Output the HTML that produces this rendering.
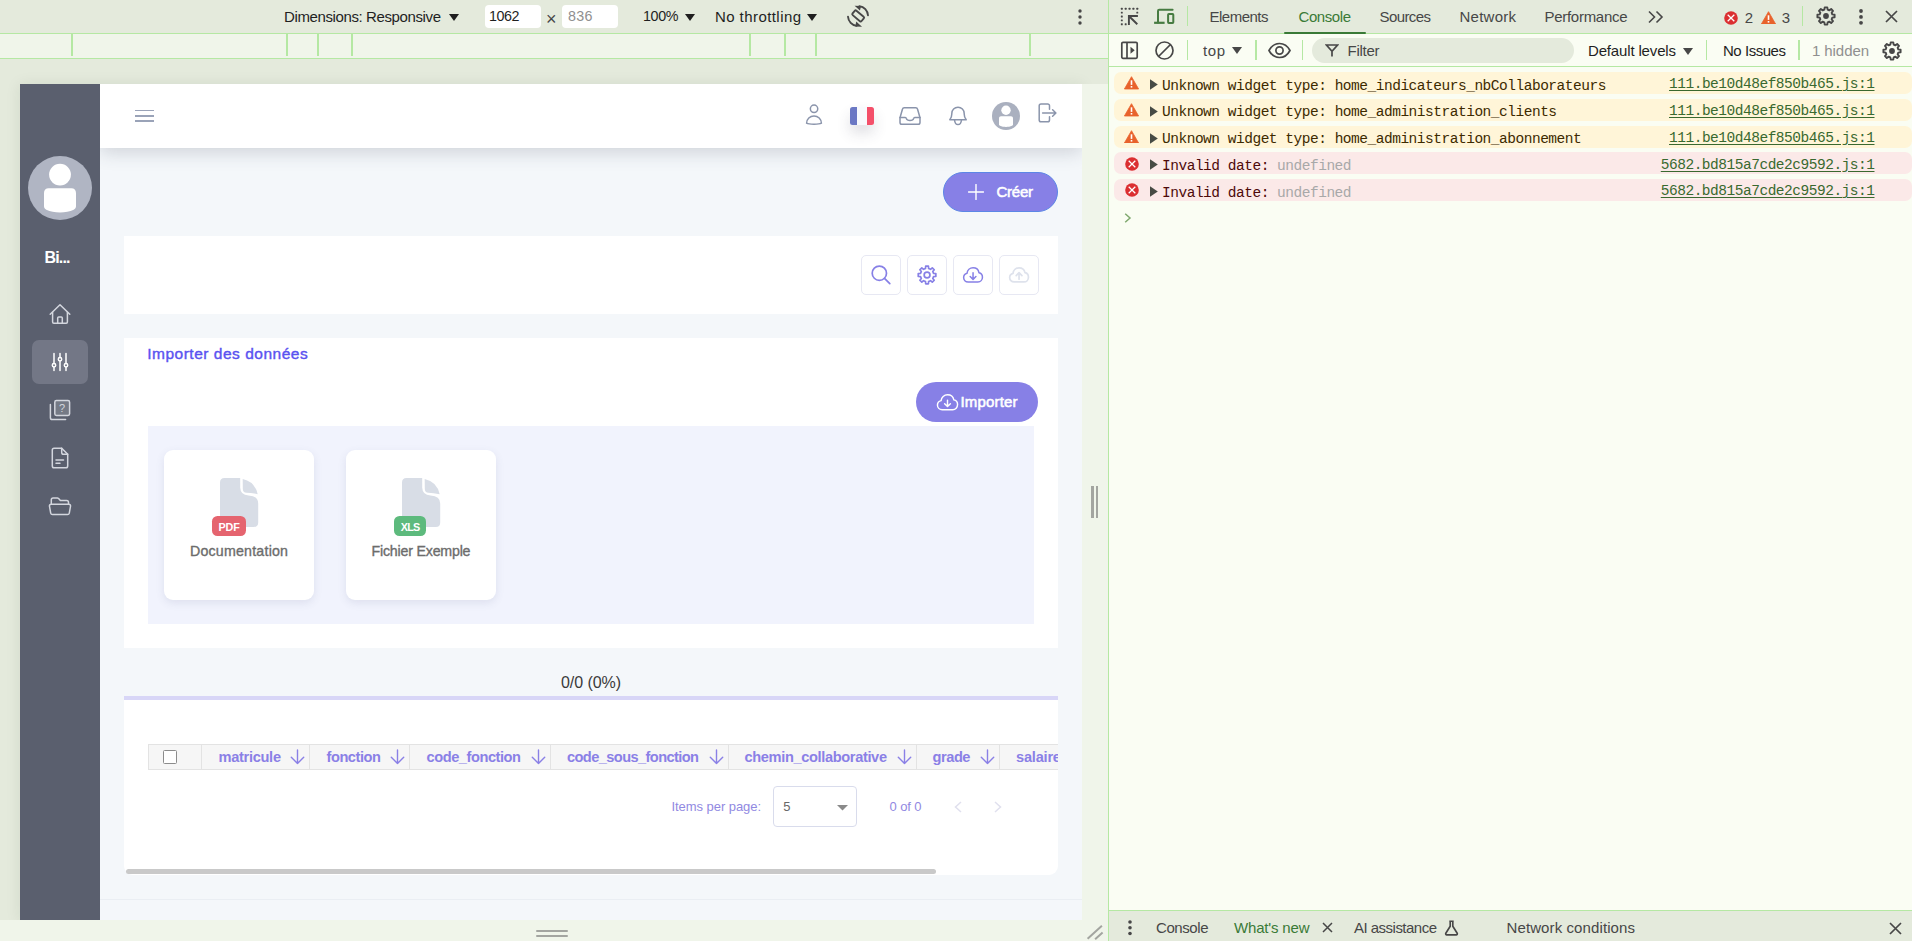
<!DOCTYPE html>
<html lang="fr">
<head>
<meta charset="utf-8">
<title>Import - DevTools</title>
<style>
html,body{margin:0;padding:0;}
body{width:1912px;height:941px;overflow:hidden;position:relative;background:#e4eadc;font-family:"Liberation Sans",sans-serif;}
.b{position:absolute;box-sizing:border-box;display:block;}
.t{position:absolute;white-space:pre;display:block;}
</style>
</head>
<body>
<!-- device toolbar -->
<div class="b" style="left:0px;top:0px;width:1108px;height:33px;background:#e4eadc;"></div>
<span class="t" style="left:284px;top:6.5px;font:400 15px 'Liberation Sans';line-height:20px;height:20px;color:#1f1f1f;letter-spacing:-0.385px;">Dimensions: Responsive</span>
<svg class="b" style="left:449px;top:13.5px;" width="10" height="7" viewBox="0 0 10 7"><path d="M0 0H10L5 7Z" fill="#1f1f1f"/></svg>
<div class="b" style="left:485px;top:5px;width:56px;height:23px;background:#fff;border-radius:4px;"></div>
<span class="t" style="left:489px;top:7.2px;font:400 14.3px 'Liberation Sans';line-height:19px;height:19px;color:#1f1f1f;letter-spacing:-0.438px;">1062</span>
<span class="t" style="left:546px;top:8px;font:400 18px 'Liberation Sans';line-height:23px;height:23px;color:#474747;letter-spacing:0px;">×</span>
<div class="b" style="left:562px;top:5px;width:56px;height:23px;background:#fff;border-radius:4px;"></div>
<span class="t" style="left:568px;top:7.2px;font:400 14.3px 'Liberation Sans';line-height:19px;height:19px;color:#8f8f8f;letter-spacing:0.32px;">836</span>
<span class="t" style="left:643px;top:7.2px;font:400 14.3px 'Liberation Sans';line-height:19px;height:19px;color:#1f1f1f;letter-spacing:-0.359px;">100%</span>
<svg class="b" style="left:685px;top:13.5px;" width="10" height="7" viewBox="0 0 10 7"><path d="M0 0H10L5 7Z" fill="#1f1f1f"/></svg>
<span class="t" style="left:715px;top:6.5px;font:400 15px 'Liberation Sans';line-height:20px;height:20px;color:#1f1f1f;letter-spacing:0.427px;">No throttling</span>
<svg class="b" style="left:807px;top:13.5px;" width="10" height="7" viewBox="0 0 10 7"><path d="M0 0H10L5 7Z" fill="#1f1f1f"/></svg>
<svg class="b" style="left:846.2px;top:4.4px;" width="24" height="24" viewBox="0 0 24 24"><g fill="none" stroke="#474747" stroke-width="1.900" stroke-linecap="round" stroke-linejoin="round"><rect x="6.100" y="9.100" width="11.800" height="5.800" rx="1.200" transform="rotate(40 12.200 12.200)"/><path d="M13.39 2.10A10 10 0 0 1 21.98 11.30"/><path d="M2.02 12.70A10 10 0 0 0 10.61 21.90"/></g><path d="M8.600 1.800L15.200 1.900 13.900 6.600z" fill="#474747"/><path d="M16 22.800L9.300 22.500 10.200 17.600z" fill="#474747"/></svg>
<svg class="b" style="left:1076px;top:8px;" width="8" height="18" viewBox="0 0 8 18"><circle cx="4" cy="3" r="1.7" fill="#474747"/><circle cx="4" cy="9" r="1.7" fill="#474747"/><circle cx="4" cy="15" r="1.7" fill="#474747"/></svg>
<div class="b" style="left:0px;top:33px;width:1108px;height:26px;background:#f0f5ea;border-top:1px solid #b5e8a3;border-bottom:1px solid #b5e8a3;"></div>
<div class="b" style="left:71.3px;top:34px;width:1.4px;height:22px;background:#b5e8a3;"></div>
<div class="b" style="left:286.3px;top:34px;width:1.4px;height:22px;background:#b5e8a3;"></div>
<div class="b" style="left:317.3px;top:34px;width:1.4px;height:22px;background:#b5e8a3;"></div>
<div class="b" style="left:351.3px;top:34px;width:1.4px;height:22px;background:#b5e8a3;"></div>
<div class="b" style="left:749.3px;top:34px;width:1.4px;height:22px;background:#b5e8a3;"></div>
<div class="b" style="left:784.3px;top:34px;width:1.4px;height:22px;background:#b5e8a3;"></div>
<div class="b" style="left:815.3px;top:34px;width:1.4px;height:22px;background:#b5e8a3;"></div>
<div class="b" style="left:1029.3px;top:34px;width:1.4px;height:22px;background:#b5e8a3;"></div>
<!-- ================= emulated page ================= -->
<div class="b" style="left:20px;top:84px;width:1062px;height:836px;background:#f4f7fa;overflow:hidden;box-shadow:0 1px 14px 1px rgba(30,40,20,.075);">
<div class="b" style="left:80px;top:0px;width:982px;height:64px;background:#fff;box-shadow:0 4px 18px rgba(52,60,80,.20);"></div>
<div class="b" style="left:0px;top:0px;width:80px;height:836px;background:#5a5f6e;"></div>
<div class="b" style="left:115px;top:25.799999999999997px;width:18.5px;height:1.5px;background:#9aa3b8;"></div>
<div class="b" style="left:115px;top:31.099999999999994px;width:18.5px;height:1.5px;background:#9aa3b8;"></div>
<div class="b" style="left:115px;top:36.400000000000006px;width:18.5px;height:1.5px;background:#9aa3b8;"></div>
<svg class="b" style="left:782px;top:19px;" width="24" height="24" viewBox="0 0 24 24"><g fill="none" stroke="#8a94ab" stroke-width="1.500" stroke-linecap="round" stroke-linejoin="round"><circle cx="12.050" cy="5.800" r="3.700"/><path d="M4.600 20.200C4.600 16 8 12.900 12 12.900s7.400 3.100 7.400 7.300C17 21.600 7 21.600 4.600 20.200z"/></g></svg>
<div class="b" style="left:830px;top:23px;width:24px;height:18px;border-radius:2.5px;background:linear-gradient(90deg,#6b78c4 0,#6b78c4 29%,#f8fafd 29%,#f8fafd 71%,#f4506a 71%);box-shadow:0 8px 14px rgba(60,60,90,.16);"></div>
<svg class="b" style="left:878px;top:20px;" width="24" height="24" viewBox="0 0 24 24"><g fill="none" stroke="#8a94ab" stroke-width="1.500" stroke-linecap="round" stroke-linejoin="round"><path d="M2 13.800L4.500 5c.2-.8.900-1.300 1.700-1.300h11.600c.8 0 1.500.500 1.700 1.300l2.500 8.800v4.600c0 1-.8 1.800-1.800 1.800H3.800c-1 0-1.800-.8-1.800-1.800z"/><path d="M2 13.400h5.200c.6 0 1 .4 1.100 1 .3 1.200 1.500 2.200 3.700 2.200s3.400-1 3.700-2.200c.1-.6.5-1 1.100-1h5.200"/></g></svg>
<svg class="b" style="left:926px;top:20px;" width="24" height="24" viewBox="0 0 24 24"><g fill="none" stroke="#8a94ab" stroke-width="1.500" stroke-linecap="round" stroke-linejoin="round"><path d="M3.800 15.800c1.200-1.500 2-3.200 2-5.800V9.400C5.800 5.900 8.500 3.150 12 3.150s6.200 2.750 6.200 6.250V10c0 2.600.8 4.300 2 5.800z"/><path d="M8.600 16.200c.2 2.500 1.500 4.300 3.400 4.300s3.200-1.800 3.400-4.300"/></g></svg>
<svg class="b" style="left:972px;top:18px;" width="28" height="28" viewBox="0 0 28 28"><circle cx="14" cy="14" r="14" fill="#aab0bf"/><circle cx="14" cy="8.300" r="4.700" fill="#fff"/><path d="M7 16.200c0-1.200.8-2 2-2h10c1.200 0 2 .8 2 2v6c0 .7-.4 1.200-1 1.500-1.800.8-3.700 1.200-6 1.200s-4.200-.4-6-1.200c-.6-.3-1-.8-1-1.500z" fill="#fff"/></svg>
<svg class="b" style="left:1015px;top:17px;" width="24" height="24" viewBox="0 0 24 24"><g fill="none" stroke="#8a94ab" stroke-width="1.500" stroke-linecap="round" stroke-linejoin="round"><path d="M14.500 8.200V4.850c0-1-.8-1.800-1.800-1.800H6c-1 0-1.800.8-1.800 1.800v14.100c0 1 .8 1.800 1.800 1.800h6.700c1 0 1.800-.8 1.800-1.800V15.800"/><path d="M7.600 12h13M17.600 8.700L20.900 12l-3.300 3.300"/></g></svg>
<svg class="b" style="left:8px;top:72px;" width="64" height="64" viewBox="0 0 64 64"><circle cx="32" cy="32" r="32" fill="#b0b5c3"/><circle cx="32" cy="18.600" r="10.900" fill="#fff"/><path d="M16 37c0-2.800 1.800-4.800 4.600-4.800h22.800c2.800 0 4.600 2 4.600 4.800v13.300c0 1.600-.8 2.800-2.300 3.400-4 1.800-8.500 2.700-13.700 2.700s-9.700-.9-13.700-2.700c-1.500-.6-2.300-1.800-2.300-3.400z" fill="#fff"/></svg>
<span class="t" style="left:24.5px;top:162.5px;font:700 16px 'Liberation Sans';line-height:21px;height:21px;color:#fff;letter-spacing:-0.836px;">Bi...</span>
<svg class="b" style="left:28px;top:218px;" width="24" height="24" viewBox="0 0 24 24"><g fill="none" stroke="#d3d6de" stroke-width="1.500" stroke-linecap="round" stroke-linejoin="round"><path d="M2.200 12.300L12 2.700l9.800 9.600"/><path d="M4.600 10.300V20c0 .7.500 1.200 1.200 1.200h12.400c.7 0 1.200-.5 1.200-1.200v-9.700"/><path d="M9.700 21.200v-5.200c0-.6.400-1 1-1h2.600c.6 0 1 .4 1 1v5.200"/></g></svg>
<div class="b" style="left:12px;top:256px;width:56px;height:44px;background:#737786;border-radius:7px;"></div>
<svg class="b" style="left:28px;top:266px;" width="24" height="24" viewBox="0 0 24 24"><g fill="none" stroke="#fff" stroke-width="1.5" stroke-linecap="round"><path d="M6 3.500v9.700M6 17.200v3.300M12 3.500v3.700M12 11.200v9.300M18 3.500v9.700M18 17.200v3.300"/><circle cx="6" cy="15.200" r="1.700"/><circle cx="12" cy="9.200" r="1.700"/><circle cx="18" cy="15.200" r="1.700"/></g></svg>
<svg class="b" style="left:28px;top:314px;" width="24" height="24" viewBox="0 0 24 24"><g fill="none" stroke="#d3d6de" stroke-width="1.500" stroke-linecap="round" stroke-linejoin="round"><rect x="6.800" y="2.600" width="14.800" height="14.800" rx="1.600" fill="rgba(255,255,255,.17)"/><path d="M2.400 6.400v13.400c0 1 .8 1.800 1.800 1.800h13.400"/></g><text x="14" y="14.300" font-family="Liberation Sans" font-size="11" fill="#d3d6de" text-anchor="middle">?</text></svg>
<svg class="b" style="left:28px;top:362px;" width="24" height="24" viewBox="0 0 24 24"><g fill="none" stroke="#d3d6de" stroke-width="1.500" stroke-linecap="round" stroke-linejoin="round"><path d="M4.300 4c0-1 .8-1.800 1.800-1.800h7.600l6 6V20c0 1-.8 1.800-1.800 1.800H6.100c-1 0-1.800-.8-1.800-1.800z"/><path d="M13.700 2.200v4.200c0 1 .8 1.800 1.800 1.800h4.200"/><path d="M8 14h7.500M8 17.300h4"/></g></svg>
<svg class="b" style="left:28px;top:410px;" width="24" height="24" viewBox="0 0 24 24"><g fill="none" stroke="#d3d6de" stroke-width="1.500" stroke-linecap="round" stroke-linejoin="round"><path d="M3.300 10.200V5.800c0-1 .8-1.800 1.800-1.800h4.200c.5 0 1 .2 1.300.6l1.300 1.400c.3.400.8.600 1.300.6h5.500c1 0 1.800.8 1.800 1.800v1.800"/><path d="M3.200 10.200h17.600c1.100 0 1.900 1 1.700 2.100l-1.200 6.800c-.2.900-.9 1.500-1.800 1.500H4.500c-.9 0-1.600-.6-1.800-1.500L1.500 12.300c-.2-1.100.6-2.100 1.700-2.100z"/></g></svg>
<div class="b" style="left:922.8px;top:87.80000000000001px;width:115.4px;height:40.2px;background:#8780e6;border-radius:20.100px;border:1px solid #5c86e6;"></div>
<svg class="b" style="left:948px;top:100px;" width="16" height="16" viewBox="0 0 16 16"><path d="M8 0.500v15M0.500 8h15" stroke="#fff" stroke-width="1.400" stroke-linecap="round"/></svg>
<span class="t" style="left:976.5px;top:98.3px;font:400 15px 'Liberation Sans';line-height:20px;height:20px;color:#fff;letter-spacing:-0.254px;-webkit-text-stroke:0.55px #fff;">Créer</span>
<div class="b" style="left:104px;top:152px;width:934px;height:78px;background:#fff;"></div>
<div class="b" style="left:841px;top:171px;width:40px;height:40px;border:1px solid #e7e8f3;border-radius:5px;background:#fff;"></div>
<div class="b" style="left:887px;top:171px;width:40px;height:40px;border:1px solid #e7e8f3;border-radius:5px;background:#fff;"></div>
<div class="b" style="left:933px;top:171px;width:40px;height:40px;border:1px solid #e7e8f3;border-radius:5px;background:#fff;"></div>
<div class="b" style="left:979px;top:171px;width:40px;height:40px;border:1px solid #e7e8f3;border-radius:5px;background:#fff;"></div>
<svg class="b" style="left:849px;top:179px;" width="24" height="24" viewBox="0 0 24 24"><g fill="none" stroke="#8780e6" stroke-width="1.700" stroke-linecap="round" stroke-linejoin="round"><circle cx="10.350" cy="10.200" r="7.150"/><path d="M15.500 15.350L20.800 20.700"/></g></svg>
<svg class="b" style="left:895px;top:179px;" width="24" height="24" viewBox="0 0 24 24"><g fill="none" stroke="#8780e6" stroke-width="1.700" stroke-linecap="round" stroke-linejoin="round"><path d="M20.84 10.61L20.84 13.39L18.56 13.56L17.76 15.50L19.25 17.23L17.28 19.20L15.55 17.71L13.61 18.51L13.44 20.79L10.66 20.79L10.49 18.51L8.55 17.71L6.82 19.20L4.85 17.23L6.34 15.50L5.54 13.56L3.26 13.39L3.26 10.61L5.54 10.44L6.34 8.50L4.85 6.77L6.82 4.80L8.55 6.29L10.49 5.49L10.66 3.21L13.44 3.21L13.61 5.49L15.55 6.29L17.28 4.80L19.25 6.77L17.76 8.50L18.56 10.44Z" stroke-linejoin="round"/><circle cx="12.050" cy="12" r="2.900"/></g></svg>
<svg class="b" style="left:941px;top:179px;" width="24" height="24" viewBox="0 0 24 24"><g fill="none" stroke="#8780e6" stroke-width="1.700" stroke-linecap="round" stroke-linejoin="round" stroke-width="1.900" transform="translate(12.050 11.900) scale(.895 .915) translate(-12 -11.750)"><path d="M6.500 19.500C3.500 19.500 1.500 17.300 1.500 14.700c0-2.300 1.600-4.200 3.800-4.700C5.600 6.600 8.500 4 12 4c3.300 0 6 2.200 6.600 5.300 2.300.4 3.900 2.400 3.900 4.900 0 2.900-2.200 5.300-5 5.300z"/><path d="M12 9.500v7M8.800 13.500L12 16.700l3.200-3.200"/></g></svg>
<svg class="b" style="left:987px;top:179px;" width="24" height="24" viewBox="0 0 24 24"><g fill="none" stroke="#dee2ec" stroke-width="1.900" stroke-linecap="round" stroke-linejoin="round" transform="translate(12.050 11.900) scale(.895 .915) translate(-12 -11.750)"><path d="M6.500 19.500C3.500 19.500 1.500 17.300 1.500 14.700c0-2.300 1.600-4.200 3.800-4.700C5.600 6.600 8.500 4 12 4c3.300 0 6 2.200 6.600 5.300 2.300.4 3.900 2.400 3.900 4.900 0 2.900-2.200 5.300-5 5.300z"/><path d="M12 16.500v-7M8.800 12.500L12 9.300l3.200 3.200"/></g></svg>
<div class="b" style="left:104px;top:254px;width:934px;height:310px;background:#fff;"></div>
<span class="t" style="left:127.19999999999999px;top:260.1px;font:400 15.5px 'Liberation Sans';line-height:20px;height:20px;color:#5a52f0;letter-spacing:0.511px;-webkit-text-stroke:0.400px #5a52f0;">Importer des données</span>
<div class="b" style="left:896px;top:298px;width:122px;height:40px;background:#8780e6;border-radius:20px;"></div>
<svg class="b" style="left:916px;top:306.5px;" width="23" height="23" viewBox="0 0 24 24"><g fill="none" stroke="#fff" stroke-width="1.500" stroke-linecap="round" stroke-linejoin="round"><path d="M6.500 19.500C3.500 19.500 1.500 17.300 1.500 14.700c0-2.300 1.600-4.200 3.800-4.700C5.600 6.600 8.500 4 12 4c3.300 0 6 2.200 6.600 5.300 2.300.4 3.900 2.400 3.900 4.900 0 2.900-2.200 5.300-5 5.300z"/><path d="M12 9.500v6.500M9 13.200L12 16.200l3-3"/></g></svg>
<span class="t" style="left:940.5px;top:308px;font:400 15px 'Liberation Sans';line-height:20px;height:20px;color:#fff;letter-spacing:0.163px;-webkit-text-stroke:0.550px #fff;">Importer</span>
<div class="b" style="left:128px;top:342px;width:886px;height:198px;background:#f1f3fd;"></div>
<div class="b" style="left:144px;top:366px;width:150px;height:150px;background:#fff;border-radius:9px;box-shadow:0 3px 8px rgba(80,90,130,.12);"></div>
<svg class="b" style="left:199.7px;top:393.5px;" width="39" height="50" viewBox="0 0 39 50"><path d="M0 4.500Q0 0 4.500 0H20.200V9.500Q20.400 17 28.500 17.400 38.200 17.800 38.200 25.500V44.500Q38.200 49 33.700 49H4.500Q0 49 0 44.500z" fill="#d8dde6"/><path d="M22.700 1Q34.800 3.600 37.700 16.200 31 14.700 26.500 14.700 22.900 14.700 22.800 11z" fill="#d8dde6"/></svg>
<div class="b" style="left:192px;top:432px;width:34.2px;height:19.7px;background:#e5646f;border-radius:5.500px;"></div>
<span class="t" style="left:198.6px;top:435.7px;font:700 10.8px 'Liberation Sans';line-height:14px;height:14px;color:#fff;letter-spacing:-0.205px;">PDF</span>
<span class="t" style="left:170px;top:457.9px;font:400 14.2px 'Liberation Sans';line-height:18px;height:18px;color:#6c6c6c;letter-spacing:0.214px;-webkit-text-stroke:0.350px #6c6c6c;">Documentation</span>
<div class="b" style="left:326px;top:366px;width:150px;height:150px;background:#fff;border-radius:9px;box-shadow:0 3px 8px rgba(80,90,130,.12);"></div>
<svg class="b" style="left:381.7px;top:393.5px;" width="39" height="50" viewBox="0 0 39 50"><path d="M0 4.500Q0 0 4.500 0H20.200V9.500Q20.400 17 28.500 17.400 38.200 17.800 38.200 25.500V44.500Q38.200 49 33.700 49H4.500Q0 49 0 44.500z" fill="#d8dde6"/><path d="M22.700 1Q34.800 3.600 37.700 16.200 31 14.700 26.500 14.700 22.900 14.700 22.800 11z" fill="#d8dde6"/></svg>
<div class="b" style="left:374.2px;top:432px;width:31.8px;height:19.7px;background:#5dba7d;border-radius:5.500px;"></div>
<span class="t" style="left:380.8px;top:435.7px;font:700 10.8px 'Liberation Sans';line-height:14px;height:14px;color:#fff;letter-spacing:-0.85px;">XLS</span>
<span class="t" style="left:351.5px;top:457.9px;font:400 14.2px 'Liberation Sans';line-height:18px;height:18px;color:#6c6c6c;letter-spacing:-0.194px;-webkit-text-stroke:0.350px #6c6c6c;">Fichier Exemple</span>
<span class="t" style="left:541px;top:588px;font:400 16px 'Liberation Sans';line-height:21px;height:21px;color:#3a3a3a;letter-spacing:-0.067px;">0/0 (0%)</span>
<div class="b" style="left:104px;top:611.5px;width:934px;height:4px;background:#d8d6f7;"></div>
<div class="b" style="left:104px;top:615.5px;width:934px;height:175.5px;background:#fff;border-radius:0 0 9px 9px;"></div>
<div class="b" style="left:128px;top:660px;width:912px;height:26px;background:#f6f6f6;border:1px solid #e3e3e3;"></div>
<div class="b" style="left:143.3px;top:666px;width:14px;height:14px;background:#fff;border:1.400px solid #8c8c8c;border-radius:1.500px;"></div>
<div class="b" style="left:181.0px;top:661px;width:1px;height:24px;background:#e3e3e3;"></div>
<div class="b" style="left:289.0px;top:661px;width:1px;height:24px;background:#e3e3e3;"></div>
<div class="b" style="left:389.0px;top:661px;width:1px;height:24px;background:#e3e3e3;"></div>
<div class="b" style="left:530.0px;top:661px;width:1px;height:24px;background:#e3e3e3;"></div>
<div class="b" style="left:708.0px;top:661px;width:1px;height:24px;background:#e3e3e3;"></div>
<div class="b" style="left:896.0px;top:661px;width:1px;height:24px;background:#e3e3e3;"></div>
<div class="b" style="left:979.0px;top:661px;width:1px;height:24px;background:#e3e3e3;"></div>
<span class="t" style="left:198.5px;top:663.5px;font:700 14.6px 'Liberation Sans';line-height:19px;height:19px;color:#8a80e6;letter-spacing:-0.299px;">matricule</span>
<svg class="b" style="left:270px;top:665px;" width="15" height="16" viewBox="0 0 15 16"><path d="M7.500 1v13.500M1.300 8.300L7.500 14.500l6.200-6.200" fill="none" stroke="#8a80e6" stroke-width="1.400" stroke-linecap="round" stroke-linejoin="round"/></svg>
<span class="t" style="left:306.5px;top:663.5px;font:700 14.6px 'Liberation Sans';line-height:19px;height:19px;color:#8a80e6;letter-spacing:-0.438px;">fonction</span>
<svg class="b" style="left:370px;top:665px;" width="15" height="16" viewBox="0 0 15 16"><path d="M7.500 1v13.500M1.300 8.300L7.500 14.500l6.200-6.200" fill="none" stroke="#8a80e6" stroke-width="1.400" stroke-linecap="round" stroke-linejoin="round"/></svg>
<span class="t" style="left:406.5px;top:663.5px;font:700 14.6px 'Liberation Sans';line-height:19px;height:19px;color:#8a80e6;letter-spacing:-0.436px;">code_fonction</span>
<svg class="b" style="left:510.5px;top:665px;" width="15" height="16" viewBox="0 0 15 16"><path d="M7.500 1v13.500M1.300 8.300L7.500 14.500l6.200-6.200" fill="none" stroke="#8a80e6" stroke-width="1.400" stroke-linecap="round" stroke-linejoin="round"/></svg>
<span class="t" style="left:547px;top:663.5px;font:700 14.6px 'Liberation Sans';line-height:19px;height:19px;color:#8a80e6;letter-spacing:-0.583px;">code_sous_fonction</span>
<svg class="b" style="left:689px;top:665px;" width="15" height="16" viewBox="0 0 15 16"><path d="M7.500 1v13.500M1.300 8.300L7.500 14.500l6.200-6.200" fill="none" stroke="#8a80e6" stroke-width="1.400" stroke-linecap="round" stroke-linejoin="round"/></svg>
<span class="t" style="left:724.5px;top:663.5px;font:700 14.6px 'Liberation Sans';line-height:19px;height:19px;color:#8a80e6;letter-spacing:-0.355px;">chemin_collaborative</span>
<svg class="b" style="left:877px;top:665px;" width="15" height="16" viewBox="0 0 15 16"><path d="M7.500 1v13.500M1.300 8.300L7.500 14.500l6.200-6.200" fill="none" stroke="#8a80e6" stroke-width="1.400" stroke-linecap="round" stroke-linejoin="round"/></svg>
<span class="t" style="left:912.5px;top:663.5px;font:700 14.6px 'Liberation Sans';line-height:19px;height:19px;color:#8a80e6;letter-spacing:-0.438px;">grade</span>
<svg class="b" style="left:960px;top:665px;" width="15" height="16" viewBox="0 0 15 16"><path d="M7.500 1v13.500M1.300 8.300L7.500 14.500l6.200-6.200" fill="none" stroke="#8a80e6" stroke-width="1.400" stroke-linecap="round" stroke-linejoin="round"/></svg>
<span class="t" style="left:996px;top:663.5px;font:700 14.6px 'Liberation Sans';line-height:19px;height:19px;color:#8a80e6;letter-spacing:-0.211px;">salaire</span>
<div class="b" style="left:1038px;top:656px;width:30px;height:40px;background:#f4f7fa;"></div>
<span class="t" style="left:651.5px;top:714px;font:400 13px 'Liberation Sans';line-height:17px;height:17px;color:#9189e2;letter-spacing:-0.059px;">Items per page:</span>
<div class="b" style="left:753px;top:702px;width:84px;height:41px;border:1px solid #d9dcec;border-radius:4px;background:#fff;"></div>
<span class="t" style="left:763.2px;top:714.2px;font:400 13px 'Liberation Sans';line-height:17px;height:17px;color:#686868;letter-spacing:0px;">5</span>
<svg class="b" style="left:816.5px;top:720.5px;" width="11" height="6" viewBox="0 0 11 6"><path d="M0 0h11L5.500 5.500z" fill="#8a8a8a"/></svg>
<span class="t" style="left:869.5px;top:714px;font:400 13px 'Liberation Sans';line-height:17px;height:17px;color:#9189e2;letter-spacing:-0.106px;">0 of 0</span>
<svg class="b" style="left:933px;top:717px;" width="10" height="12" viewBox="0 0 10 12"><path d="M8 1L2.500 6 8 11" fill="none" stroke="#e0e0ee" stroke-width="1.500"/></svg>
<svg class="b" style="left:973px;top:717px;" width="10" height="12" viewBox="0 0 10 12"><path d="M2 1l5.500 5L2 11" fill="none" stroke="#e0e0ee" stroke-width="1.500"/></svg>
<div class="b" style="left:106px;top:785px;width:810px;height:4.5px;background:#c9c9c9;border-radius:2.500px;"></div>
<div class="b" style="left:80px;top:815px;width:982px;height:1px;background:#eaeef3;"></div>
</div>
<div class="b" style="left:1082px;top:84px;width:26px;height:857px;background:#f0f5ea;"></div>
<div class="b" style="left:0px;top:920px;width:1108px;height:21px;background:#f0f5ea;"></div>
<div class="b" style="left:1091.3px;top:486px;width:2.3px;height:32px;background:#a3a5a0;"></div>
<div class="b" style="left:1096.1px;top:486px;width:2.3px;height:32px;background:#a3a5a0;"></div>
<div class="b" style="left:536px;top:930px;width:32px;height:2.3px;background:#a3a5a0;border-radius:1px;"></div>
<div class="b" style="left:536px;top:934.6px;width:32px;height:2.3px;background:#a3a5a0;border-radius:1px;"></div>
<svg class="b" style="left:1084px;top:920px;" width="24" height="21" viewBox="1084 920 24 21"><path d="M1087.600 938.700L1101.900 925.700M1095.100 939.300L1102.600 932.500" stroke="#a3a5a0" stroke-width="2" fill="none"/></svg>
<!-- ================= devtools panel ================= -->
<div class="b" style="left:1108px;top:0px;width:804px;height:941px;background:#fafdf3;border-left:1px solid #b5e8a3;"></div>
<div class="b" style="left:1109px;top:0px;width:803px;height:33.5px;background:#e4eadc;border-bottom:1px solid #b5e8a3;"></div>
<svg class="b" style="left:1118px;top:4px;" width="24" height="24" viewBox="1118 4 24 24"><rect x="1120.85" y="7.85" width="1.900" height="1.900" rx="0.500" fill="#474747"/><rect x="1124.72" y="7.85" width="1.900" height="1.900" rx="0.500" fill="#474747"/><rect x="1128.59" y="7.85" width="1.900" height="1.900" rx="0.500" fill="#474747"/><rect x="1132.46" y="7.85" width="1.900" height="1.900" rx="0.500" fill="#474747"/><rect x="1136.33" y="7.85" width="1.900" height="1.900" rx="0.500" fill="#474747"/><rect x="1120.85" y="11.72" width="1.900" height="1.900" rx="0.500" fill="#474747"/><rect x="1120.85" y="15.59" width="1.900" height="1.900" rx="0.500" fill="#474747"/><rect x="1120.85" y="19.46" width="1.900" height="1.900" rx="0.500" fill="#474747"/><rect x="1120.85" y="23.33" width="1.900" height="1.900" rx="0.500" fill="#474747"/><rect x="1136.33" y="11.72" width="1.900" height="1.900" rx="0.500" fill="#474747"/><rect x="1124.72" y="23.33" width="1.900" height="1.900" rx="0.500" fill="#474747"/><path d="M1137.900 16.050H1128.900V25M1128.900 16.050L1137.300 24.300" fill="none" stroke="#474747" stroke-width="1.900" stroke-linejoin="miter"/></svg>
<svg class="b" style="left:1152px;top:4px;" width="24" height="24" viewBox="1152 4 24 24"><path d="M1158 22.500V11Q1158 9.800 1159.200 9.800H1172.600" fill="none" stroke="#467b41" stroke-width="2" stroke-linecap="round"/><path d="M1154.100 22.800H1164.600" stroke="#467b41" stroke-width="2.200" fill="none"/><rect x="1168.100" y="14" width="5.200" height="8.900" rx="0.700" fill="none" stroke="#467b41" stroke-width="2"/></svg>
<div class="b" style="left:1187px;top:6px;width:1px;height:20px;background:#b5e8a3;"></div>
<span class="t" style="left:1209.5px;top:6.5px;font:400 15px 'Liberation Sans';line-height:20px;height:20px;color:#474747;letter-spacing:-0.504px;">Elements</span>
<span class="t" style="left:1298.5px;top:6.5px;font:400 15px 'Liberation Sans';line-height:20px;height:20px;color:#3a7a37;letter-spacing:-0.424px;">Console</span>
<span class="t" style="left:1379.5px;top:6.5px;font:400 15px 'Liberation Sans';line-height:20px;height:20px;color:#474747;letter-spacing:-0.589px;">Sources</span>
<span class="t" style="left:1459.5px;top:6.5px;font:400 15px 'Liberation Sans';line-height:20px;height:20px;color:#474747;letter-spacing:0.247px;">Network</span>
<span class="t" style="left:1544.5px;top:6.5px;font:400 15px 'Liberation Sans';line-height:20px;height:20px;color:#474747;letter-spacing:-0.287px;">Performance</span>
<div class="b" style="left:1284px;top:31.5px;width:82px;height:2.5px;background:#3a7a37;border-radius:1px;"></div>
<svg class="b" style="left:1647px;top:10px;" width="17" height="14" viewBox="0 0 17 14"><path d="M2 1.500l5.500 5.500L2 12.500M9.500 1.500l5.500 5.500-5.500 5.500" fill="none" stroke="#474747" stroke-width="1.600"/></svg>
<svg class="b" style="left:1724.2px;top:10.899999999999999px;" width="14" height="14" viewBox="0 0 14 14"><circle cx="7" cy="7" r="6.8" fill="#db2f31"/><path d="M3.7 3.7L10.3 10.3M10.3 3.7L3.7 10.3" stroke="#fff" stroke-width="1.250" fill="none"/></svg>
<span class="t" style="left:1744.7px;top:7.8px;font:400 15px 'Liberation Sans';line-height:20px;height:20px;color:#474747;letter-spacing:0px;">2</span>
<svg class="b" style="left:1761.0px;top:10.5px;" width="15" height="13.5" viewBox="0 0 15 13.5"><path d="M7.500 0.700L14.600 13H0.400z" fill="#e8622c" stroke="#e8622c" stroke-width="0.800" stroke-linejoin="round"/><rect x="6.700" y="4.300" width="1.600" height="4.600" fill="#fff"/><rect x="6.700" y="10" width="1.600" height="1.600" fill="#fff"/></svg>
<span class="t" style="left:1781.8px;top:7.8px;font:400 15px 'Liberation Sans';line-height:20px;height:20px;color:#474747;letter-spacing:0px;">3</span>
<div class="b" style="left:1802px;top:6px;width:1px;height:20px;background:#b5e8a3;"></div>
<svg class="b" style="left:1814.7px;top:5.399999999999999px;" width="22" height="22" viewBox="0 0 22 22"><path d="M19.60 9.71L19.60 12.29L17.28 12.67L16.62 14.26L18.00 16.17L16.17 18.00L14.26 16.62L12.67 17.28L12.29 19.60L9.71 19.60L9.33 17.28L7.74 16.62L5.83 18.00L4.00 16.17L5.38 14.26L4.72 12.67L2.40 12.29L2.40 9.71L4.72 9.33L5.38 7.74L4.00 5.83L5.83 4.00L7.74 5.38L9.33 4.72L9.71 2.40L12.29 2.40L12.67 4.72L14.26 5.38L16.17 4.00L18.00 5.83L16.62 7.74L17.28 9.33Z" fill="none" stroke="#474747" stroke-width="1.900" stroke-linejoin="round"/><circle cx="11" cy="11" r="2.900" fill="#474747"/></svg>
<svg class="b" style="left:1856.5px;top:7.6px;" width="8" height="18" viewBox="0 0 8 18"><circle cx="4" cy="3" r="1.900" fill="#474747"/><circle cx="4" cy="8.900" r="1.900" fill="#474747"/><circle cx="4" cy="14.800" r="1.900" fill="#474747"/></svg>
<svg class="b" style="left:1885px;top:10px;" width="13" height="13" viewBox="0 0 13 13"><path d="M1 1l11 11M12 1L1 12" stroke="#474747" stroke-width="1.700" fill="none"/></svg>
<div class="b" style="left:1109px;top:66px;width:803px;height:1px;background:#b5e8a3;"></div>
<svg class="b" style="left:1120px;top:40px;" width="21" height="21" viewBox="0 0 21 21"><rect x="1.800" y="2.300" width="15.400" height="16" rx="1.200" fill="none" stroke="#474747" stroke-width="1.700"/><path d="M7 2v16.500" stroke="#474747" stroke-width="1.700"/><path d="M10.500 6.800l4.200 3.500-4.200 3.500z" fill="#474747"/></svg>
<svg class="b" style="left:1154px;top:40px;" width="21" height="21" viewBox="0 0 21 21"><circle cx="10.500" cy="10.500" r="8.500" fill="none" stroke="#474747" stroke-width="1.700"/><path d="M4.500 16.500L16.500 4.500" stroke="#474747" stroke-width="1.700"/></svg>
<div class="b" style="left:1187px;top:40px;width:1px;height:20px;background:#b5e8a3;"></div>
<span class="t" style="left:1203px;top:41.1px;font:400 15px 'Liberation Sans';line-height:20px;height:20px;color:#474747;letter-spacing:0.57px;">top</span>
<svg class="b" style="left:1231.5px;top:47.4px;" width="10" height="7" viewBox="0 0 10 7"><path d="M0 0H10L5 7Z" fill="#474747"/></svg>
<div class="b" style="left:1255px;top:40px;width:2px;height:20px;background:#b5e8a3;"></div>
<svg class="b" style="left:1268px;top:42px;" width="23" height="17" viewBox="0 0 23 17"><path d="M1 8.500C3.500 3.800 7 1.500 11.500 1.500S19.500 3.800 22 8.500C19.500 13.200 16 15.500 11.500 15.500S3.500 13.200 1 8.500z" fill="none" stroke="#474747" stroke-width="1.700"/><circle cx="11.500" cy="8.500" r="3.600" fill="none" stroke="#474747" stroke-width="1.700"/></svg>
<div class="b" style="left:1302px;top:40px;width:1px;height:20px;background:#b5e8a3;"></div>
<div class="b" style="left:1311.5px;top:38px;width:262.5px;height:24.8px;background:#e4eadc;border-radius:12.400px;"></div>
<svg class="b" style="left:1325px;top:44px;" width="14" height="13" viewBox="0 0 14 13"><path d="M1.400 1h11.200L7 7.300zM7 7V12.500" fill="none" stroke="#474747" stroke-width="1.700" stroke-linejoin="miter"/></svg>
<span class="t" style="left:1347.5px;top:40.5px;font:400 15px 'Liberation Sans';line-height:20px;height:20px;color:#474747;letter-spacing:-0.269px;">Filter</span>
<span class="t" style="left:1588px;top:40.5px;font:400 15px 'Liberation Sans';line-height:20px;height:20px;color:#1f1f1f;letter-spacing:-0.157px;">Default levels</span>
<svg class="b" style="left:1683px;top:47.5px;" width="10" height="7" viewBox="0 0 10 7"><path d="M0 0H10L5 7Z" fill="#474747"/></svg>
<div class="b" style="left:1706px;top:40px;width:1px;height:20px;background:#b5e8a3;"></div>
<span class="t" style="left:1723px;top:40.5px;font:400 15px 'Liberation Sans';line-height:20px;height:20px;color:#1f1f1f;letter-spacing:-0.463px;">No Issues</span>
<div class="b" style="left:1798px;top:40px;width:2px;height:20px;background:#b5e8a3;"></div>
<span class="t" style="left:1812px;top:40.5px;font:400 15px 'Liberation Sans';line-height:20px;height:20px;color:#8f8f8f;letter-spacing:-0.08px;">1 hidden</span>
<svg class="b" style="left:1880.5px;top:39.5px;" width="22" height="22" viewBox="0 0 22 22"><path d="M19.60 9.71L19.60 12.29L17.28 12.67L16.62 14.26L18.00 16.17L16.17 18.00L14.26 16.62L12.67 17.28L12.29 19.60L9.71 19.60L9.33 17.28L7.74 16.62L5.83 18.00L4.00 16.17L5.38 14.26L4.72 12.67L2.40 12.29L2.40 9.71L4.72 9.33L5.38 7.74L4.00 5.83L5.83 4.00L7.74 5.38L9.33 4.72L9.71 2.40L12.29 2.40L12.67 4.72L14.26 5.38L16.17 4.00L18.00 5.83L16.62 7.74L17.28 9.33Z" fill="none" stroke="#474747" stroke-width="1.900" stroke-linejoin="round"/><circle cx="11" cy="11" r="2.900" fill="#474747"/></svg>
<div class="b" style="left:1114px;top:72px;width:797.5px;height:22px;background:#fff5d8;border-radius:7px;"></div>
<svg class="b" style="left:1124.0px;top:76.4px;" width="15" height="13.5" viewBox="0 0 15 13.5"><path d="M7.500 0.700L14.600 13H0.400z" fill="#e8622c" stroke="#e8622c" stroke-width="0.800" stroke-linejoin="round"/><rect x="6.700" y="4.300" width="1.600" height="4.600" fill="#fff"/><rect x="6.700" y="10" width="1.600" height="1.600" fill="#fff"/></svg>
<svg class="b" style="left:1150px;top:79.1px;" width="8" height="11" viewBox="0 0 8 11"><path d="M0 0.200L7.800 5.500 0 10.800z" fill="#474b44"/></svg>
<span class="t" style="left:1162px;top:76.5px;font:400 14.5px 'Liberation Mono';line-height:18px;height:18px;color:#3d2a00;letter-spacing:-0.481px;">Unknown widget type: home_indicateurs_nbCollaborateurs</span>
<span class="t" style="left:1669.0px;top:75.4px;font:400 14.5px 'Liberation Mono';line-height:18px;height:18px;color:#39692f;letter-spacing:-0.481px;text-decoration:underline;text-underline-offset:2px;">111.be10d48ef850b465.js:1</span>
<div class="b" style="left:1114px;top:98.8px;width:797.5px;height:22px;background:#fff5d8;border-radius:7px;"></div>
<svg class="b" style="left:1124.0px;top:103.2px;" width="15" height="13.5" viewBox="0 0 15 13.5"><path d="M7.500 0.700L14.600 13H0.400z" fill="#e8622c" stroke="#e8622c" stroke-width="0.800" stroke-linejoin="round"/><rect x="6.700" y="4.300" width="1.600" height="4.600" fill="#fff"/><rect x="6.700" y="10" width="1.600" height="1.600" fill="#fff"/></svg>
<svg class="b" style="left:1150px;top:105.89999999999999px;" width="8" height="11" viewBox="0 0 8 11"><path d="M0 0.200L7.800 5.500 0 10.800z" fill="#474b44"/></svg>
<span class="t" style="left:1162px;top:103.3px;font:400 14.5px 'Liberation Mono';line-height:18px;height:18px;color:#3d2a00;letter-spacing:-0.481px;">Unknown widget type: home_administration_clients</span>
<span class="t" style="left:1669.0px;top:102.2px;font:400 14.5px 'Liberation Mono';line-height:18px;height:18px;color:#39692f;letter-spacing:-0.481px;text-decoration:underline;text-underline-offset:2px;">111.be10d48ef850b465.js:1</span>
<div class="b" style="left:1114px;top:125.5px;width:797.5px;height:22px;background:#fff5d8;border-radius:7px;"></div>
<svg class="b" style="left:1124.0px;top:129.9px;" width="15" height="13.5" viewBox="0 0 15 13.5"><path d="M7.500 0.700L14.600 13H0.400z" fill="#e8622c" stroke="#e8622c" stroke-width="0.800" stroke-linejoin="round"/><rect x="6.700" y="4.300" width="1.600" height="4.600" fill="#fff"/><rect x="6.700" y="10" width="1.600" height="1.600" fill="#fff"/></svg>
<svg class="b" style="left:1150px;top:132.6px;" width="8" height="11" viewBox="0 0 8 11"><path d="M0 0.200L7.800 5.500 0 10.800z" fill="#474b44"/></svg>
<span class="t" style="left:1162px;top:130px;font:400 14.5px 'Liberation Mono';line-height:18px;height:18px;color:#3d2a00;letter-spacing:-0.481px;">Unknown widget type: home_administration_abonnement</span>
<span class="t" style="left:1669.0px;top:128.9px;font:400 14.5px 'Liberation Mono';line-height:18px;height:18px;color:#39692f;letter-spacing:-0.481px;text-decoration:underline;text-underline-offset:2px;">111.be10d48ef850b465.js:1</span>
<div class="b" style="left:1114px;top:152.2px;width:797.5px;height:22px;background:#fbe9e8;border-radius:7px;"></div>
<svg class="b" style="left:1124.5px;top:156.5px;" width="14" height="14" viewBox="0 0 14 14"><circle cx="7" cy="7" r="6.8" fill="#db2f31"/><path d="M3.7 3.7L10.3 10.3M10.3 3.7L3.7 10.3" stroke="#fff" stroke-width="1.250" fill="none"/></svg>
<svg class="b" style="left:1150px;top:159.29999999999998px;" width="8" height="11" viewBox="0 0 8 11"><path d="M0 0.200L7.800 5.500 0 10.800z" fill="#474b44"/></svg>
<span class="t" style="left:1162px;top:156.7px;font:400 14.5px 'Liberation Mono';line-height:18px;height:18px;color:#4e0a0a;letter-spacing:-0.481px;">Invalid date:</span>
<span class="t" style="left:1277.08px;top:156.7px;font:400 14.5px 'Liberation Mono';line-height:18px;height:18px;color:#a8a8a8;letter-spacing:-0.481px;">undefined</span>
<span class="t" style="left:1660.78px;top:155.6px;font:400 14.5px 'Liberation Mono';line-height:18px;height:18px;color:#39692f;letter-spacing:-0.481px;text-decoration:underline;text-underline-offset:2px;">5682.bd815a7cde2c9592.js:1</span>
<div class="b" style="left:1114px;top:179px;width:797.5px;height:22px;background:#fbe9e8;border-radius:7px;"></div>
<svg class="b" style="left:1124.5px;top:183.3px;" width="14" height="14" viewBox="0 0 14 14"><circle cx="7" cy="7" r="6.8" fill="#db2f31"/><path d="M3.7 3.7L10.3 10.3M10.3 3.7L3.7 10.3" stroke="#fff" stroke-width="1.250" fill="none"/></svg>
<svg class="b" style="left:1150px;top:186.1px;" width="8" height="11" viewBox="0 0 8 11"><path d="M0 0.200L7.800 5.500 0 10.800z" fill="#474b44"/></svg>
<span class="t" style="left:1162px;top:183.5px;font:400 14.5px 'Liberation Mono';line-height:18px;height:18px;color:#4e0a0a;letter-spacing:-0.481px;">Invalid date:</span>
<span class="t" style="left:1277.08px;top:183.5px;font:400 14.5px 'Liberation Mono';line-height:18px;height:18px;color:#a8a8a8;letter-spacing:-0.481px;">undefined</span>
<span class="t" style="left:1660.78px;top:182.4px;font:400 14.5px 'Liberation Mono';line-height:18px;height:18px;color:#39692f;letter-spacing:-0.481px;text-decoration:underline;text-underline-offset:2px;">5682.bd815a7cde2c9592.js:1</span>
<svg class="b" style="left:1124px;top:213px;" width="8" height="10" viewBox="0 0 8 10"><path d="M1.200 0.800L6 5 1.200 9.200" fill="none" stroke="#7fa86e" stroke-width="1.500"/></svg>
<div class="b" style="left:1109px;top:910px;width:803px;height:31px;background:#e4eadc;border-top:1px solid #b5e8a3;"></div>
<svg class="b" style="left:1125.5px;top:918.8px;" width="8" height="18" viewBox="0 0 8 18"><circle cx="4" cy="3" r="1.800" fill="#474747"/><circle cx="4" cy="8.800" r="1.800" fill="#474747"/><circle cx="4" cy="14.500" r="1.800" fill="#474747"/></svg>
<span class="t" style="left:1156px;top:917.5px;font:400 15px 'Liberation Sans';line-height:20px;height:20px;color:#474747;letter-spacing:-0.424px;">Console</span>
<span class="t" style="left:1234px;top:917.5px;font:400 15px 'Liberation Sans';line-height:20px;height:20px;color:#3a7a37;letter-spacing:-0.174px;">What&#x27;s new</span>
<svg class="b" style="left:1322px;top:921.5px;" width="11" height="11" viewBox="0 0 11 11"><path d="M1 1l9 9M10 1L1 10" stroke="#474747" stroke-width="1.500" fill="none"/></svg>
<span class="t" style="left:1354px;top:917.5px;font:400 15px 'Liberation Sans';line-height:20px;height:20px;color:#474747;letter-spacing:-0.518px;">AI assistance</span>
<svg class="b" style="left:1444px;top:919.5px;" width="15" height="16" viewBox="0 0 15 16"><path d="M5.300 1.200h4.400M6.200 1.200v5L1.800 13.200c-.4.700.1 1.600.9 1.600h9.600c.8 0 1.300-.9.900-1.600L8.800 6.200v-5" fill="none" stroke="#474747" stroke-width="1.650" stroke-linejoin="round"/></svg>
<span class="t" style="left:1506.5px;top:917.5px;font:400 15px 'Liberation Sans';line-height:20px;height:20px;color:#474747;letter-spacing:0.104px;">Network conditions</span>
<svg class="b" style="left:1888.5px;top:921.5px;" width="13" height="13" viewBox="0 0 13 13"><path d="M1 1l11 11M12 1L1 12" stroke="#474747" stroke-width="1.700" fill="none"/></svg>
</body>
</html>
